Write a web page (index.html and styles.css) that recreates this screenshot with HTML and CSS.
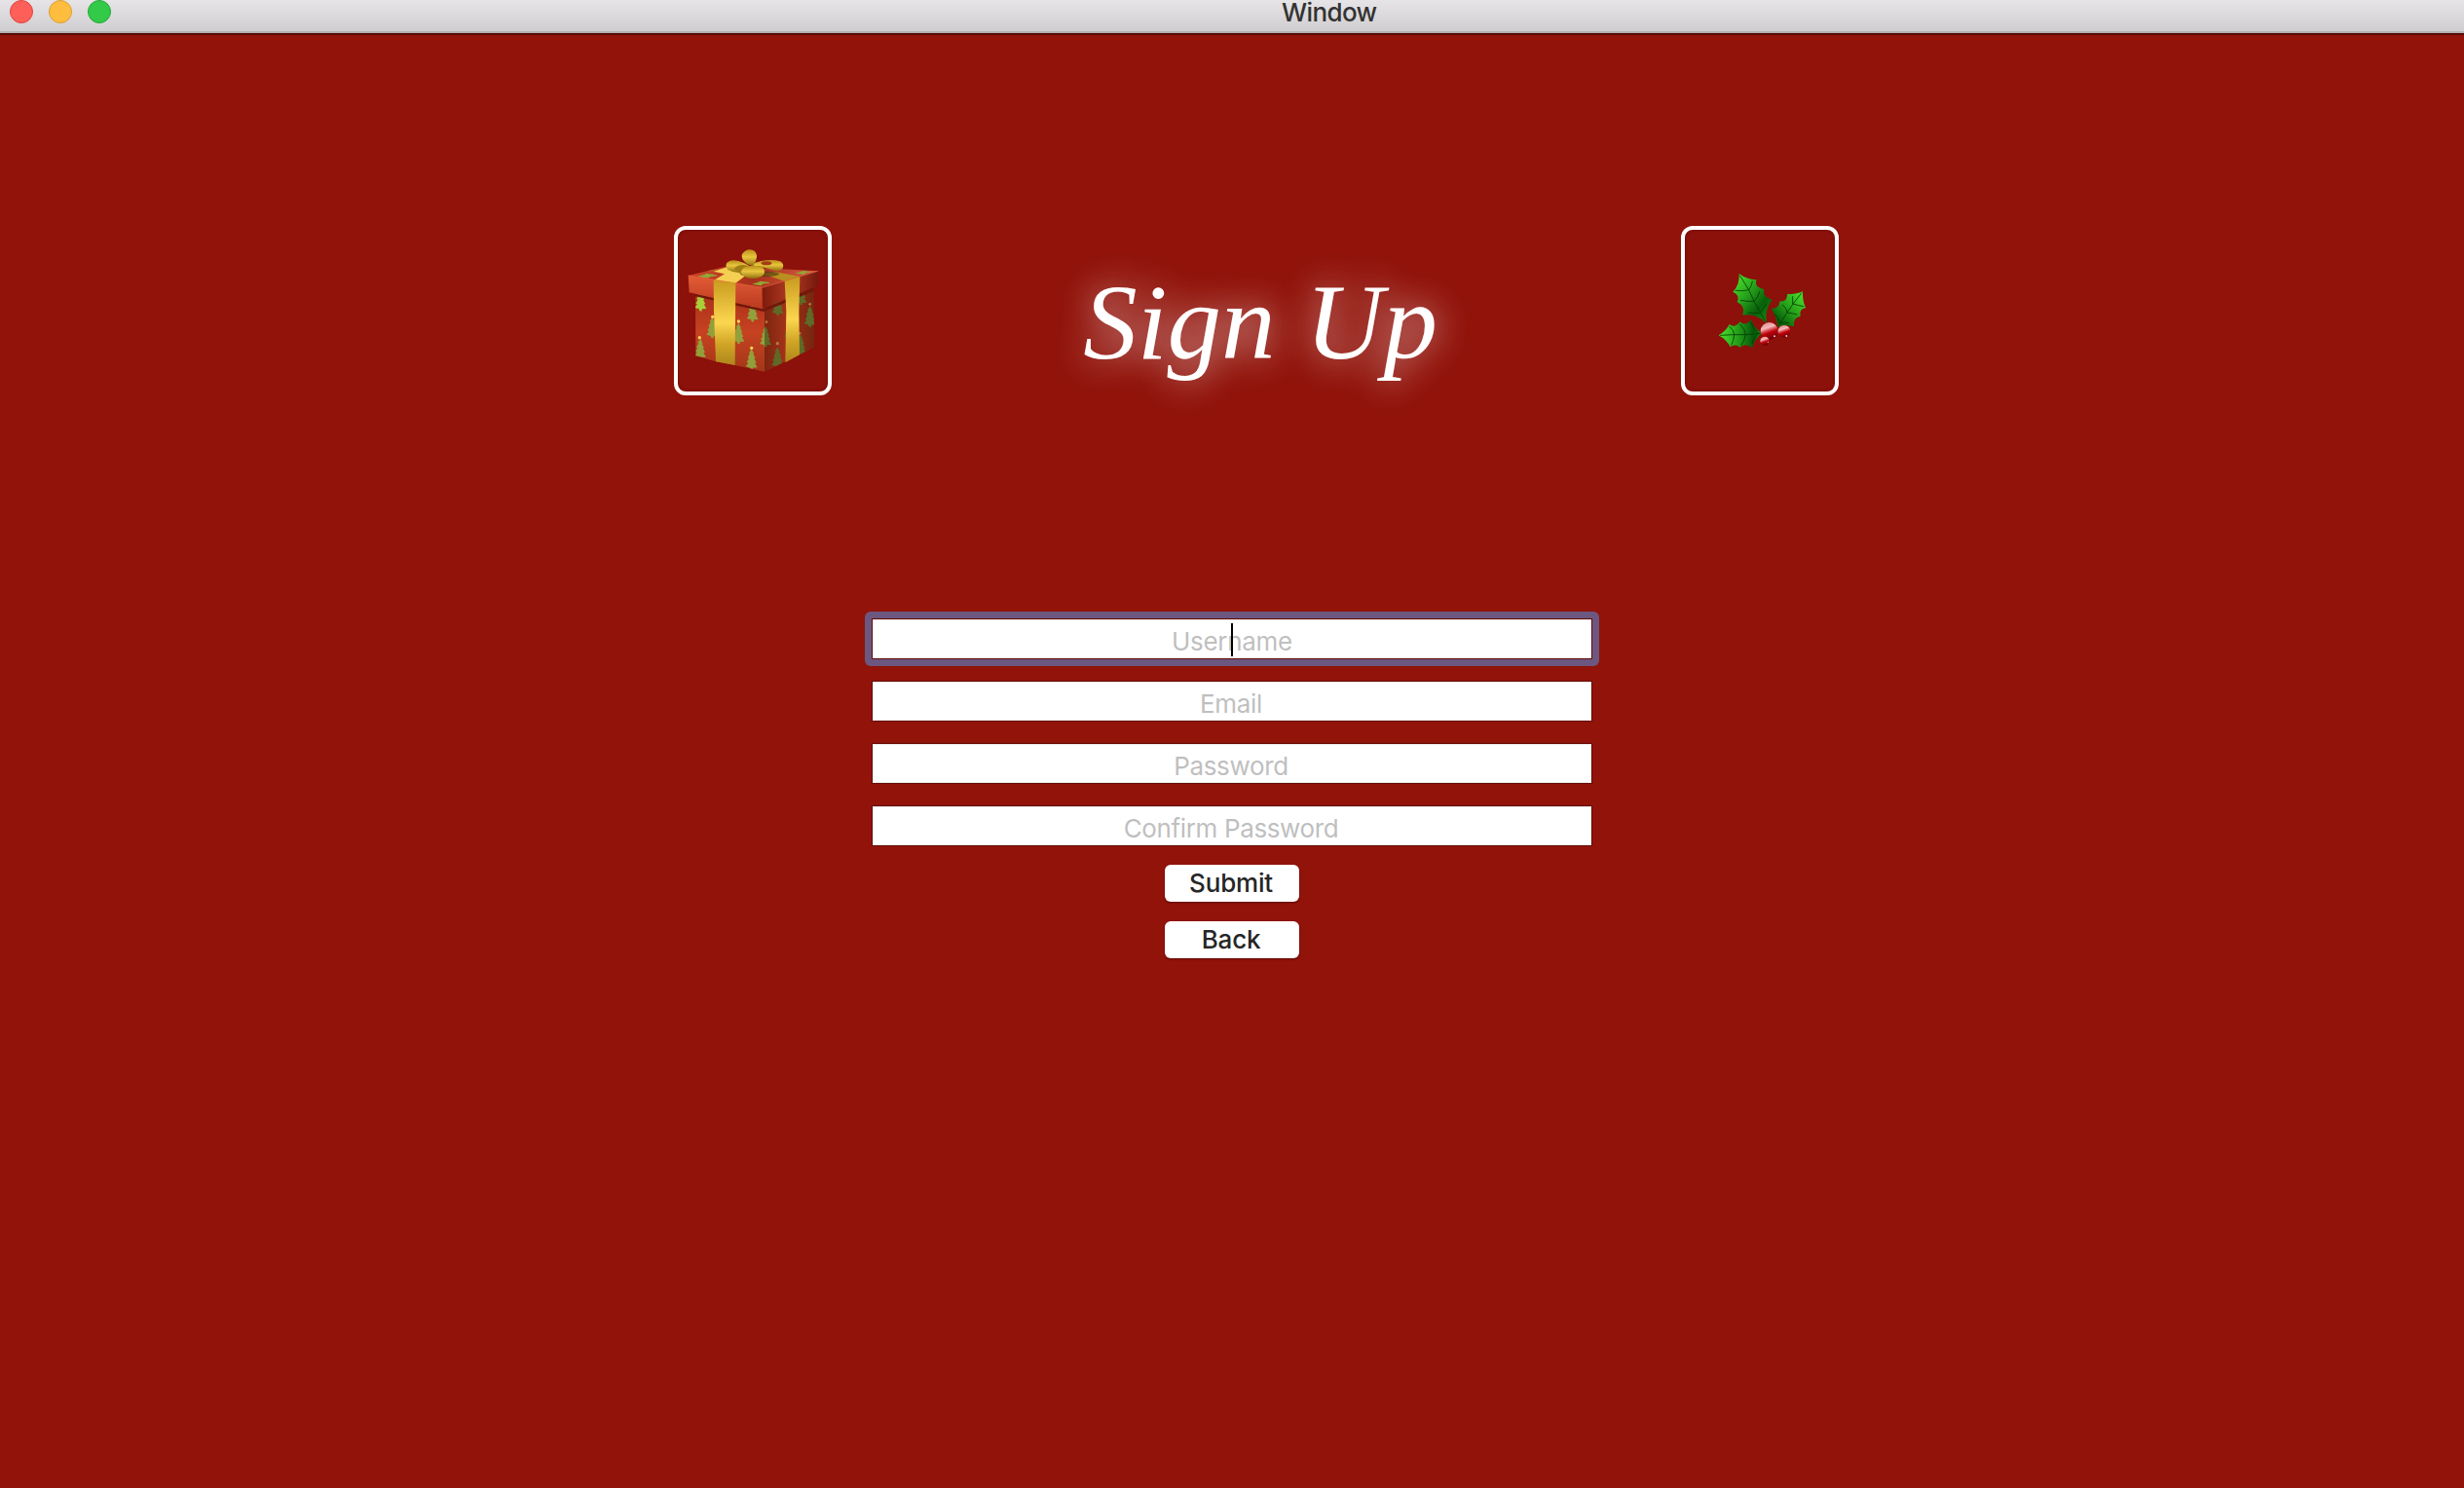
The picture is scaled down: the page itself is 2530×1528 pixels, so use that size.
FILE: index.html
```html
<!DOCTYPE html>
<html lang="en">
<head>
<meta charset="utf-8">
<title>Window</title>
<link rel="stylesheet" href="styles.css">
</head>
<body>
<header class="titlebar">
  <div class="lights"><span class="light close"></span><span class="light minimize"></span><span class="light maximize"></span></div>
  <span class="window-title">Window</span>
</header>
<main class="content">
  <section class="banner">
    <div class="frame">
      <svg viewBox="48 48 462 498">
        <defs>
          <linearGradient id="gold" x1="0" y1="0" x2="0" y2="1"><stop offset="0" stop-color="#c99a1e"/><stop offset=".5" stop-color="#fbd650"/><stop offset=".75" stop-color="#d1a526"/><stop offset="1" stop-color="#ae871b"/></linearGradient>
          <linearGradient id="bow" x1="0" y1="0" x2="0" y2="1"><stop offset="0" stop-color="#b98e18"/><stop offset=".45" stop-color="#e9c63d"/><stop offset="1" stop-color="#907010"/></linearGradient>
          <linearGradient id="front" x1="0" y1="0" x2="0" y2="1"><stop offset="0" stop-color="#a82f19"/><stop offset=".5" stop-color="#c64221"/><stop offset="1" stop-color="#a33718"/></linearGradient>
          <linearGradient id="side" x1="0" y1="0" x2="1" y2="0"><stop offset="0" stop-color="#7b2510"/><stop offset=".45" stop-color="#a5331a"/><stop offset="1" stop-color="#75260f"/></linearGradient>
          <linearGradient id="lid" x1="0" y1="0" x2="0" y2="1"><stop offset="0" stop-color="#e25c35"/><stop offset="1" stop-color="#bb3a20"/></linearGradient>
          <linearGradient id="lidside" x1="0" y1="0" x2="1" y2="0"><stop offset="0" stop-color="#7e1b0d"/><stop offset=".5" stop-color="#b13b22"/><stop offset="1" stop-color="#74190d"/></linearGradient>
          <linearGradient id="top" x1="0" y1="0" x2="1" y2="0"><stop offset="0" stop-color="#ce4527"/><stop offset=".5" stop-color="#a7301a"/><stop offset="1" stop-color="#d95b42"/></linearGradient>
          <path id="tree" d="M0-28 8-13 5-13 12 1 8 1 15 15 10 15 18 29 4 30 4 37-4 35-4 30-18 26-10 15-15 13-8 1-12-1-5-13-8-15Z"/>
          <clipPath id="frontclip"><path d="M102 245 315 290V485L103 436Z"/></clipPath>
          <clipPath id="sideclip"><path d="M315 285 468 228V410L315 485Z"/></clipPath>
        </defs>
        <path d="M102 240 315 285V485L224 465 165 454 103 436Z" fill="url(#front)"/>
        <path d="M315 285 468 225V410L315 485Z" fill="url(#side)"/>
        <g fill="#92a03c" clip-path="url(#frontclip)">
          <use href="#tree" x="118" y="262" fill="#a8cf38"/><use href="#tree" x="154" y="345"/><use href="#tree" x="117" y="411"/><use href="#tree" x="235" y="363"/><use href="#tree" x="275" y="443"/><use href="#tree" x="278" y="295"/><use href="#tree" x="318" y="373"/>
        </g>
        <g fill="#5f6a27" clip-path="url(#sideclip)">
          <use href="#tree" x="318" y="373"/><use href="#tree" x="356" y="276"/><use href="#tree" x="355" y="438"/><use href="#tree" x="393" y="350"/><use href="#tree" x="425" y="398"/><use href="#tree" x="455" y="311"/><use href="#tree" x="427" y="243"/>
        </g>
        <g fill="#ffd35a"><circle cx="155" cy="316" r="5"/><circle cx="115" cy="380" r="5"/><circle cx="235" cy="330" r="5"/><circle cx="275" cy="412" r="5"/></g>
        <g fill="#b9793a"><circle cx="321" cy="332" r="4"/><circle cx="355" cy="398" r="5"/><circle cx="455" cy="277" r="4"/><circle cx="423" cy="367" r="4"/></g>
        <path d="M102 245 310 292 468 226V236L312 300 102 253Z" fill="#71180b"/>
        <path d="M80 189 200 160 480 175 308 226Z" fill="url(#top)"/>
        <g fill="#91a635"><path d="m108 191 24-6 2-3 28 4 10 4-22 2-10 5-12-2Z"/><path d="m276 215 20-6 6-3 24 3 6 4-20 1-8 6Z"/><path d="m408 183 26-9 26 4-16 2-8 6-12-2Z"/><path d="m140 175 24-5 22 3-15 5Z"/></g>
        <path d="M158 204 250 176 205 159 135 178 192 183Z" fill="#c54727"/>
        <path d="M158 176 205 161 275 176 226 212 158 204 192 184Z" fill="#f4cf52"/>
        <path d="M310 184 350 178 424 192 379 207Z" fill="#b99020"/>
        <path d="M80 189 308 226 309 291 83 241Z" fill="url(#lid)"/>
        <path d="M308 226 480 175V219L309 291Z" fill="url(#lidside)"/>
        <path d="M80 189 308 226 480 175" fill="none" stroke="#ef6a47" stroke-width="2"/>
        <path d="M158 202Q190 211 226 210L224 465 165 454 159 300Z" fill="url(#gold)"/>
        <path d="M377 206 424 192 421 300 423 433 379 457 382 300Z" fill="url(#gold)"/>
        <ellipse cx="300" cy="184" rx="60" ry="9" fill="#584011" opacity=".7"/>
        <path d="M276 153Q325 134 363 145 377 153 371 167 359 179 340 172L306 162 286 164Z" fill="url(#bow)"/><ellipse cx="321" cy="151" rx="16" ry="6" fill="#a33c18"/>
        <path d="M275 163 252 150Q217 134 199 149 193 160 202 171 220 181 250 178Z" fill="url(#bow)"/>
        <path d="M222 166Q236 151 264 158L282 165 260 182Q226 187 222 166Z" fill="#a17f16"/>
        <path d="M261 153Q241 138 246 123 258 104 278 110 292 116 291 132 290 144 280 160Z" fill="url(#bow)"/>
        <path d="M278 163Q309 151 315 172 309 189 290 181Z" fill="#b5911d"/>
        <ellipse cx="279" cy="178" rx="36" ry="20" fill="url(#bow)"/>
      </svg>
    </div>
    <h1 class="heading">Sign Up</h1>
    <div class="frame">
      <svg viewBox="60 48 462 498">
        <defs>
          <linearGradient id="leafA" x1="0" y1="0" x2=".9" y2=".9"><stop offset="0" stop-color="#52ec31"/><stop offset=".42" stop-color="#28a51b"/><stop offset=".75" stop-color="#08600b"/><stop offset="1" stop-color="#128410"/></linearGradient>
          <linearGradient id="leafB" x1="1" y1="0" x2="0" y2="1"><stop offset="0" stop-color="#50e92f"/><stop offset=".5" stop-color="#239d18"/><stop offset=".8" stop-color="#075d09"/><stop offset="1" stop-color="#16820f"/></linearGradient>
          <linearGradient id="leafC" x1="0" y1="0" x2="1" y2="0"><stop offset="0" stop-color="#4ce72d"/><stop offset=".45" stop-color="#249d19"/><stop offset=".8" stop-color="#06580a"/><stop offset="1" stop-color="#17830f"/></linearGradient>
          <linearGradient id="berry" x1=".3" y1="0" x2=".65" y2="1"><stop offset="0" stop-color="#e58487"/><stop offset=".3" stop-color="#f3b9ba"/><stop offset=".5" stop-color="#cf2d35"/><stop offset=".6" stop-color="#b9000b"/><stop offset="1" stop-color="#650006"/></linearGradient>
        </defs>
        <path d="M227 183Q251 201 280 202 273 225 304 231 299 256 329 263 306 292 311 335 278 303 238 311 247 283 221 271 231 249 208 239 230 216 227 183Z" fill="url(#leafA)"/>
        <path d="M423 238Q422 267 432 289 411 291 416 314 391 319 396 346 366 338 347 348 342 316 326 291 351 291 352 268 375 271 376 245 401 249 423 238Z" fill="url(#leafB)"/>
        <path d="M164 373Q186 361 197 339 213 353 230 331 246 347 264 325 273 351 298 367 276 383 267 412 247 395 230 410 215 397 200 409 188 386 164 373Z" fill="url(#leafC)"/>
        <g fill="none" stroke="#053b05" stroke-width="2.5" stroke-linecap="round">
          <path d="M229 188 257 233 273 268 309 332M216 235Q238 238 257 233 266 221 268 207M232 265Q253 270 273 268 288 253 290 239M255 303Q276 306 291 304 306 286 311 276"/>
          <path d="M420 242 394 275 375 303 347 345M392 254V276Q411 281 425 284M361 279Q375 290 375 303 393 305 406 309M337 308Q352 319 351 335 365 332 380 335"/>
          <path d="M169 373 210 371 247 371 298 367M198 346Q213 360 212 371 211 390 203 403M231 340Q247 357 247 371 244 390 234 403M263 333Q272 354 285 367 270 385 267 398"/>
        </g>
        <circle cx="320" cy="360" r="27" fill="url(#berry)"/><circle cx="366" cy="361" r="19" fill="url(#berry)"/><circle cx="306" cy="391" r="14" fill="url(#berry)"/>
        <g fill="#d9c9cf"><circle cx="336" cy="376" r="3"/><circle cx="373" cy="375" r="3"/><circle cx="316" cy="394" r="2"/></g>
      </svg>
    </div>
  </section>
  <form class="signup">
    <div class="focus-ring">
      <div class="field"><input class="input username" type="text" placeholder="Username"><span class="caret"></span></div>
    </div>
    <div class="field"><input class="input" type="text" placeholder="Email"></div>
    <div class="field"><input class="input" type="password" placeholder="Password"></div>
    <div class="field"><input class="input" type="password" placeholder="Confirm Password"></div>
    <div class="actions">
      <button class="button" type="button">Submit</button>
      <button class="button" type="button">Back</button>
    </div>
  </form>
</main>
</body>
</html>
```
FILE: styles.css
```css
* { box-sizing: border-box; }
body {
  margin: 0;
  height: 1528px;
  overflow: hidden;
  background: #91130a;
  font-family: Inter, "Liberation Sans", sans-serif;
  font-size: 26px;
}
.titlebar {
  display: grid;
  grid-template-columns: 200px 1fr;
  height: 36px;
  background: linear-gradient(#e6e4e6, #d0ced0 32px, #b3b0b2 32px, #b3b0b2 34px, #560b06 34px);
}
.lights { display: flex; gap: 16px; padding-left: 10px; }
.light { width: 24px; height: 24px; border: 1px solid; border-radius: 50%; }
.close { background: #fe5f58; border-color: #e0443f; }
.minimize { background: #febd3f; border-color: #dc9e34; }
.maximize { background: #33c949; border-color: #24a936; }
.window-title {
  padding-left: 1116px;
  line-height: 26px;
  color: #333;
  font-weight: 450;
  letter-spacing: -.6px;
}
.content { display: flex; flex-direction: column; align-items: center; }
.banner {
  display: flex;
  justify-content: space-between;
  width: 1196px;
  height: 174px;
  margin: 196px 0 0 50px;
}
.frame {
  width: 162px;
  height: 174px;
  border: 4px solid #fff;
  border-radius: 12px;
  background: #8b110a;
  box-shadow: inset 0 0 3px #650a05;
}
.frame svg { display: block; width: 154px; height: 166px; }
.heading {
  margin: 37px 0 0;
  padding-left: 8px;
  font: italic 400 111px/124px "Snell Roundhand", "Liberation Serif", serif;
  word-spacing: 3px;
  color: #fff;
  white-space: nowrap;
  text-shadow: 0 0 36px rgba(255, 255, 255, .75);
}
.signup { display: flex; flex-direction: column; gap: 22px; width: 740px; margin-top: 229px; }
.focus-ring { margin: -7px; padding: 7px; border-radius: 6px; background: #6b577f; }
.field { position: relative; height: 42px; border: 1px solid #650b07; background: #fff; box-shadow: inset 0 0 0 1px #eee; }
.input {
  display: block;
  width: 100%;
  height: 40px;
  padding: 4px 2px 0 0;
  border: 0;
  outline: 0;
  background: transparent;
  font: inherit;
  letter-spacing: -.36px;
  text-align: center;
}
.username { padding-right: 0; letter-spacing: -.3px; }
.input::placeholder { color: #bfbfbf; opacity: 1; }
.caret { position: absolute; left: 368px; top: 4px; width: 2px; height: 34px; background: #000; }
.actions { display: flex; flex-direction: column; align-items: center; gap: 20px; margin-top: -3px; }
.button {
  width: 138px;
  height: 38px;
  padding: 0 2px 0 0;
  border: 0;
  border-radius: 6px;
  background: #fff;
  color: #262626;
  font: inherit;
  font-weight: 450;
  line-height: 38px;
  letter-spacing: -.2px;
  box-shadow: 0 1px 2px rgba(70, 0, 0, .7);
}
```
